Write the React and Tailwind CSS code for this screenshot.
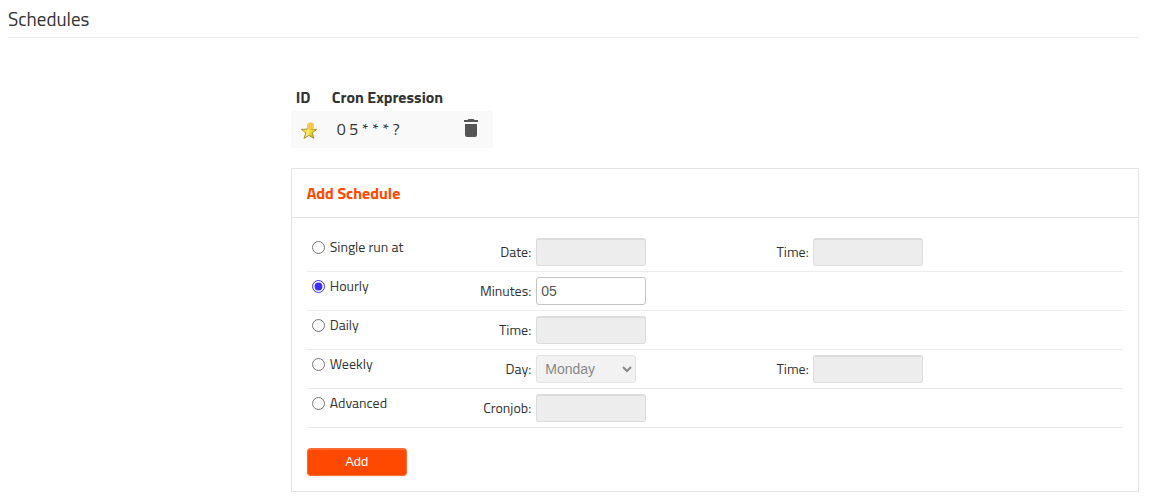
import React, { useState } from 'react';

const rows = [
  { id: 'single', label: 'Single run at', field: 'Date:', time: true },
  { id: 'hourly', label: 'Hourly', field: 'Minutes:' },
  { id: 'daily', label: 'Daily', field: 'Time:' },
  { id: 'weekly', label: 'Weekly', field: 'Day:', time: true, days: true },
  { id: 'advanced', label: 'Advanced', field: 'Cronjob:' },
];

const days = ['Monday', 'Tuesday', 'Wednesday', 'Thursday', 'Friday', 'Saturday', 'Sunday'];

const inputClass =
  'h-7 w-[110px] rounded-[3px] border border-[#c4c4c4] bg-white px-1 font-["Liberation_Sans",sans-serif] text-sm text-[#555] disabled:border-[#dcdcdc] disabled:border-t-2 disabled:bg-[#ededed]';

const StarIcon = () => (
  <svg width="18" height="18" viewBox="0 0 18 18" className="block" aria-hidden="true">
    <defs>
      <linearGradient id="star" x1="0" y1="0" x2="1" y2="1">
        <stop offset="0" stopColor="#fff46a" />
        <stop offset="0.6" stopColor="#f0d82c" />
        <stop offset="1" stopColor="#b99a10" />
      </linearGradient>
    </defs>
    <path
      d="M9 2l2 5.2 5.6.2-4.4 3.5 1.8 5.5L9 13.4l-5 3 1.8-5.5L1.4 7.4 7 7.2z"
      fill="url(#star)"
      stroke="#a38c27"
      strokeWidth="0.9"
      strokeLinejoin="round"
    />
    <path d="M9 4.5v8L5.5 15l1.2-4.3z" fill="#fffbb0" opacity="0.55" />
    <circle cx="10.5" cy="4" r="3.2" fill="#ffcb45" stroke="#fbc04a" strokeWidth="0.8" />
    <circle cx="10.5" cy="4" r="1.2" fill="#ffe9a0" stroke="#f59a1c" strokeWidth="0.6" />
  </svg>
);

const TrashIcon = () => (
  <svg width="14" height="18" viewBox="0 0 14 18" className="block" fill="#555" aria-hidden="true">
    <path d="M1 5h12v11a2 2 0 0 1-2 2H3a2 2 0 0 1-2-2zM0 1h3.5l1-1h5l1 1H14v2H0z" />
  </svg>
);

const App = () => {
  const [mode, setMode] = useState('hourly');
  const [minutes, setMinutes] = useState('05');

  return (
    <div className="bg-white pt-1 pr-[13px] pb-2 pl-2 font-[Titillium_Web,Roboto,sans-serif] text-sm text-[#333]">
      <h1 className="border-b border-[#ececec] pb-1 text-[19px] leading-[29px]">Schedules</h1>

      <div className="ml-[25%] pt-[47px]">
        <table className="w-[202px] border-collapse text-left">
          <thead>
            <tr className="h-[26px] text-base leading-5 font-bold">
              <th className="w-9 pb-0.5 pl-[5px]">ID</th>
              <th className="pb-0.5 pl-[5px] whitespace-nowrap" colSpan={2}>Cron Expression</th>
            </tr>
          </thead>
          <tbody>
            <tr className="h-[37px] bg-[#f9f9f9] text-base">
              <td className="pt-0.5 pl-[9px]"><StarIcon /></td>
              <td className="pb-0.5 pl-2.5 whitespace-nowrap">0 5 * * * ?</td>
              <td className="w-[29px] pb-1">
                <button type="button" aria-label="Delete schedule" className="block"><TrashIcon /></button>
              </td>
            </tr>
          </tbody>
        </table>

        <section className="mt-5 border border-[#e3e3e3]">
          <h2 className="border-b border-[#e3e3e3] px-[15px] py-3 text-base leading-6 font-bold text-[#ff4800]">
            Add Schedule
          </h2>
          <form className="p-[15px]" onSubmit={(e) => e.preventDefault()}>
            {rows.map((row) => (
              <div
                key={row.id}
                className="grid h-[39px] grid-cols-[27.5%_34%_1fr] items-center border-b border-[#ececec]"
              >
                <div className="flex justify-between">
                  <label className="flex items-center gap-[5px] pb-2.5 pl-[5px]">
                    <input
                      type="radio"
                      name="mode"
                      className="size-[13px] accent-[#3b2eff]"
                      checked={mode === row.id}
                      onChange={() => setMode(row.id)}
                    />
                    {row.label}
                  </label>
                  <label htmlFor={`${row.id}-value`} className="self-center">{row.field}</label>
                </div>
                <div className="flex items-center justify-between pl-[5px]">
                  {row.days ? (
                    <select
                      id={`${row.id}-value`}
                      disabled={mode !== row.id}
                      className="h-7 w-[100px] rounded-[3px] border border-[#c4c4c4] bg-white px-1 font-['Liberation_Sans',sans-serif] text-sm text-[#555] disabled:border-[#e3e3e3] disabled:bg-[#f2f2f2] disabled:text-[#888]"
                    >
                      {days.map((day) => (
                        <option key={day}>{day}</option>
                      ))}
                    </select>
                  ) : row.id === 'hourly' ? (
                    <input
                      id="hourly-value"
                      type="text"
                      className={inputClass}
                      value={minutes}
                      disabled={mode !== 'hourly'}
                      onChange={(e) => setMinutes(e.target.value)}
                    />
                  ) : (
                    <input id={`${row.id}-value`} type="text" className={inputClass} disabled={mode !== row.id} />
                  )}
                  {row.time && <label htmlFor={`${row.id}-time`}>Time:</label>}
                </div>
                <div className="flex pl-1">
                  {row.time && (
                    <input id={`${row.id}-time`} type="text" className={inputClass} disabled={mode !== row.id} />
                  )}
                </div>
              </div>
            ))}
            <button
              type="submit"
              className="mt-5 block h-7 w-[100px] rounded-[4px] border border-t-2 border-[#ff6a30] bg-[#ff4800] pb-0.5 font-['Liberation_Sans',sans-serif] text-[13px] leading-4 text-white shadow-xs"
            >
              Add
            </button>
          </form>
        </section>
      </div>
    </div>
  );
};

export default App;
